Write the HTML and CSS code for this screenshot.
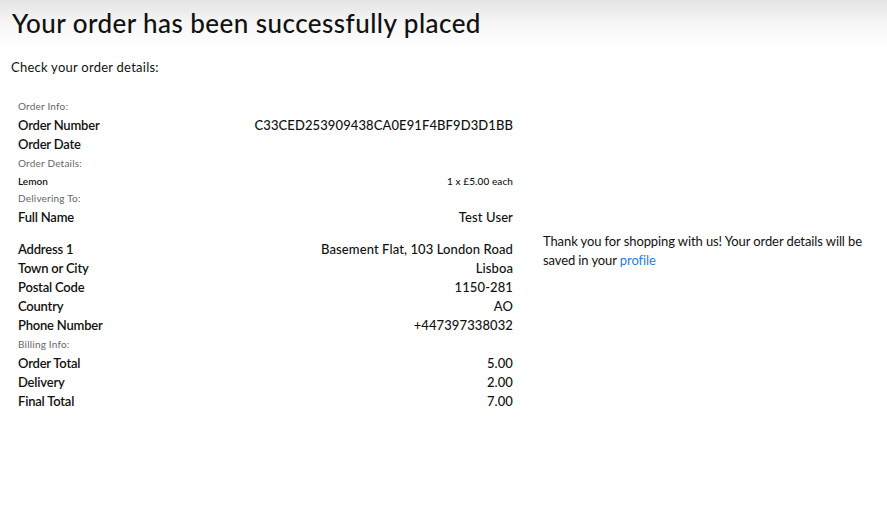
FILE: index.html
```html
<!DOCTYPE html>
<html lang="en">
<head>
<meta charset="utf-8">
<title>Order placed</title>
<link rel="stylesheet" href="styles.css">
</head>
<body>
<header class="page-head">
  <h1 class="title">Your order has been successfully placed</h1>
</header>
<main class="content">
  <p class="intro">Check your order details:</p>
  <div class="layout">
    <div class="details">
      <div class="section">Order Info:</div>
      <div class="row"><span class="label">Order Number</span><span class="value">C33CED253909438CA0E91F4BF9D3D1BB</span></div>
      <div class="row"><span class="label">Order Date</span><span class="value"></span></div>
      <div class="section">Order Details:</div>
      <div class="row item"><span class="label">Lemon</span><span class="value">1 x £5.00 each</span></div>
      <div class="section">Delivering To:</div>
      <div class="row"><span class="label">Full Name</span><span class="value">Test User</span></div>
      <div class="row empty"><span class="label"></span><span class="value"></span></div>
      <div class="row"><span class="label">Address 1</span><span class="value">Basement Flat, 103 London Road</span></div>
      <div class="row"><span class="label">Town or City</span><span class="value">Lisboa</span></div>
      <div class="row"><span class="label">Postal Code</span><span class="value">1150-281</span></div>
      <div class="row"><span class="label">Country</span><span class="value">AO</span></div>
      <div class="row"><span class="label">Phone Number</span><span class="value">+447397338032</span></div>
      <div class="section">Billing Info:</div>
      <div class="row"><span class="label">Order Total</span><span class="value">5.00</span></div>
      <div class="row"><span class="label">Delivery</span><span class="value">2.00</span></div>
      <div class="row"><span class="label">Final Total</span><span class="value">7.00</span></div>
    </div>
    <aside class="thanks">
      <p>Thank you for shopping with us! Your order details will be saved in your <a href="#" class="link">profile</a></p>
    </aside>
  </div>
</main>
</body>
</html>
```

FILE: styles.css
```css
* { box-sizing: border-box; }
html, body { margin: 0; padding: 0; background: #fff; }
body {
  font-family: "Lato", "Noto Sans", sans-serif;
  color: #111;
}
.page-head {
  background: linear-gradient(to bottom, #e4e4e4 0px, #f7f7f7 25px, #ffffff 50px);
  padding: 8px 12px 4px;
  height: 50px;
}
.title {
  margin: 0;
  font-size: 26px;
  font-weight: 500;
  line-height: 30px;
  letter-spacing: 0.45px;
}
.content { padding: 0 0 0 11px; }
.intro {
  margin: 8px 0 0;
  font-size: 13px;
  line-height: 18px;
  letter-spacing: 0.25px;
}
.layout {
  display: grid;
  grid-template-columns: 509px 1fr;
  column-gap: 23px;
  align-items: center;
  margin-top: 16px;
}
.details { padding: 5px 7px 0; }
.section {
  font-size: 10px;
  color: #666;
  line-height: 19px;
  letter-spacing: 0.2px;
}
.row {
  display: flex;
  justify-content: space-between;
  font-size: 13px;
  line-height: 19px;
  min-height: 19px;
}
.row .label { font-weight: 600; letter-spacing: -0.2px; }
.row .value { font-weight: 500; letter-spacing: 0.1px; }
.row.item { font-size: 10px; line-height: 16px; min-height: 16px; }
.row.item .label { letter-spacing: 0; }
.row.empty { min-height: 13px; }
.thanks { padding-bottom: 1px; }
.thanks p {
  margin: 0;
  font-size: 13px;
  line-height: 19px;
  letter-spacing: -0.1px;
}
.link { color: #2a7ae2; text-decoration: none; }
```
